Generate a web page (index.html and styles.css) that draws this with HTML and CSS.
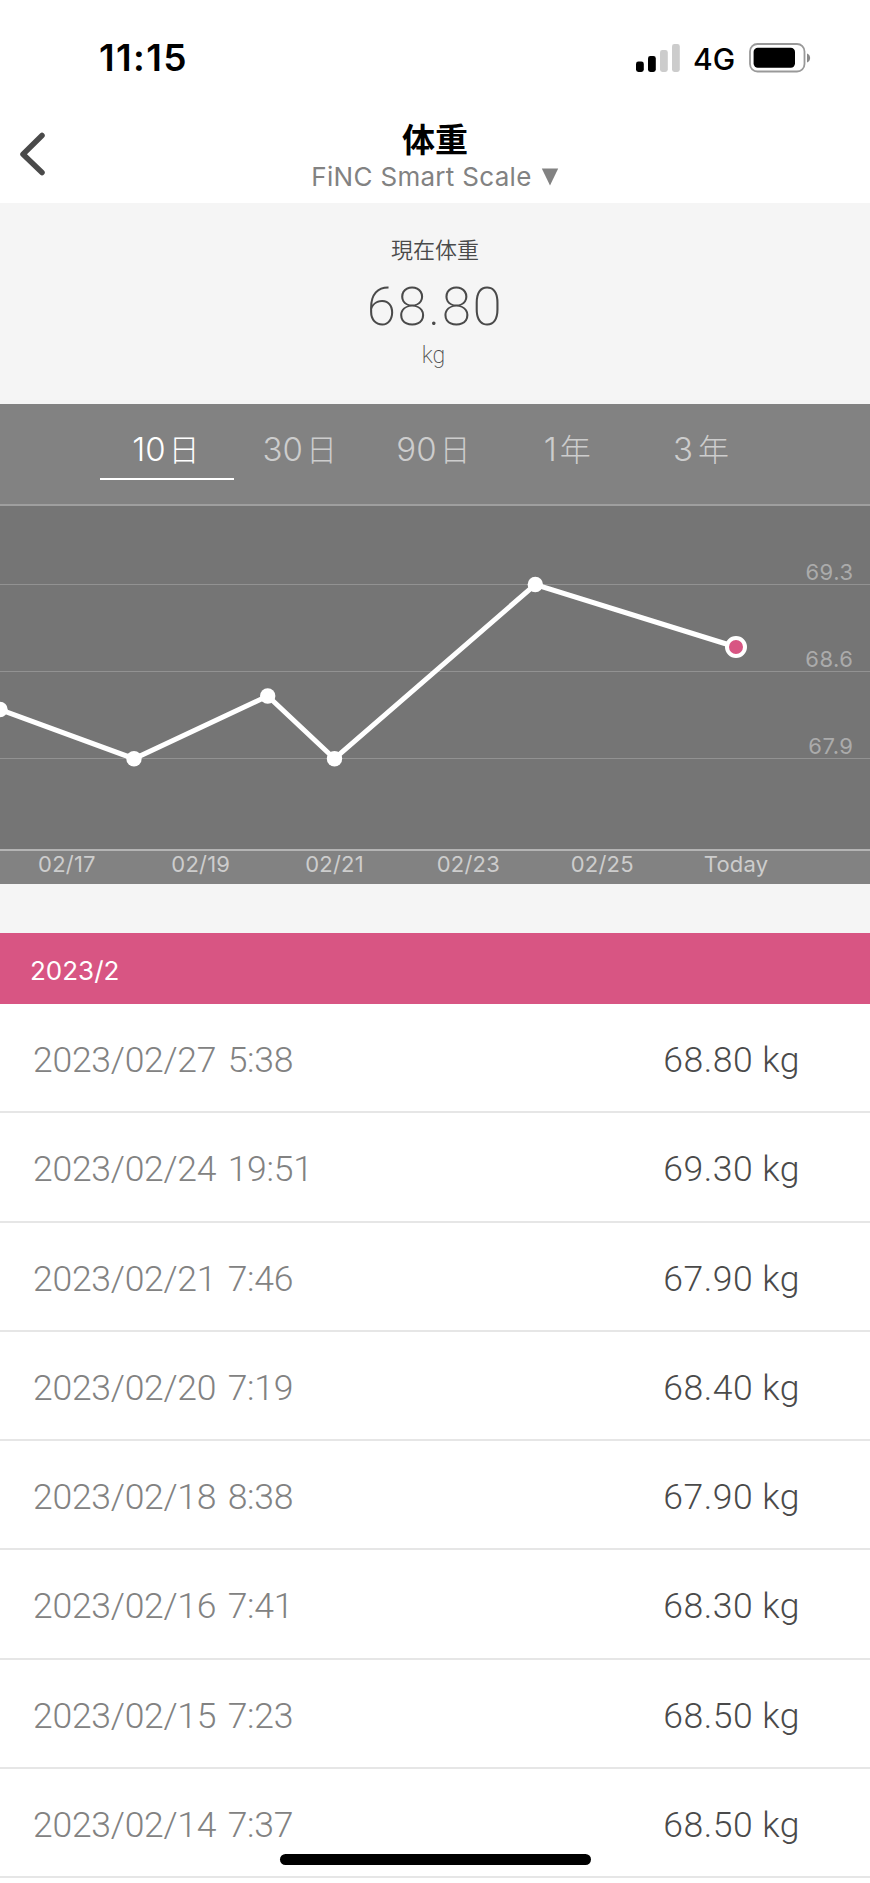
FILE: index.html
```html
<!DOCTYPE html>
<html lang="ja">

<head>
  <meta charset="UTF-8">
  <meta name="viewport" content="width=device-width, initial-scale=1.0">
  <title>体重</title>
  <link rel="stylesheet" href="styles.css">
</head>

<body>
  <div class="status-bar">
    <span class="time">11:15</span>
    <div class="status-icons">
      <svg class="signal" width="44" height="28" viewBox="0 0 44 28">
        <rect x="0" y="17.5" width="7.8" height="10.5" rx="2.4" />
        <rect x="12" y="12" width="7.8" height="16" rx="2.4" />
        <rect class="off" x="24" y="6" width="7.8" height="22" rx="2.4" />
        <rect class="off" x="36" y="0" width="7.8" height="28" rx="2.4" />
      </svg>
      <span class="network">4G</span>
      <svg class="battery" width="62" height="30" viewBox="0 0 62 30">
        <rect x="1" y="1" width="54.5" height="27.5" rx="7.5" fill="none" stroke="#999" stroke-width="1.8" />
        <rect x="4.6" y="4.8" width="41.4" height="20" rx="4.2" />
        <path d="M58 10.5c4.2 1.6 4.2 7.4 0 9z" fill="#888" />
      </svg>
    </div>
  </div>

  <header class="header">
    <svg class="back" width="28" height="46" viewBox="0 0 28 46">
      <path d="M23 3.5L4 22.2L23 40.5" />
    </svg>
    <h1>体重</h1>
    <div class="device">
      <span>FiNC Smart Scale</span>
      <svg width="18" height="18" viewBox="0 0 18 18">
        <path d="M0.8 0.5h16.4L9 17.5z" />
      </svg>
    </div>
  </header>

  <section class="current">
    <div class="current-label">現在体重</div>
    <div class="current-value">68.80</div>
    <div class="current-unit">kg</div>
  </section>

  <section class="graph">
    <nav class="tabs">
      <span class="tab active">10<b>日</b></span>
      <span class="tab">30<b>日</b></span>
      <span class="tab">90<b>日</b></span>
      <span class="tab">1<b>年</b></span>
      <span class="tab">3<b class="wide">年</b></span>
    </nav>
    <svg class="chart" width="870" height="343" viewBox="0 506 870 343">
      <g class="grid">
        <path d="M0 584.5H870" />
        <path d="M0 671.5H870" />
        <path d="M0 758.5H870" />
      </g>
      <g class="scale">
        <text x="853.5" y="579.5">69.3</text>
        <text x="853.5" y="666.5">68.6</text>
        <text x="853.5" y="753.5">67.9</text>
      </g>
      <polyline class="line" points="0,709.5 134,758.7 267.7,696 334.5,758.7 535.3,584.5 736,647" />
      <g class="points">
        <circle cx="0" cy="709.5" r="7.7" />
        <circle cx="134" cy="758.7" r="7.7" />
        <circle cx="267.7" cy="696" r="7.7" />
        <circle cx="334.5" cy="758.7" r="7.7" />
        <circle cx="535.3" cy="584.5" r="7.7" />
      </g>
      <circle class="today" cx="736" cy="647" r="9" />
    </svg>
    <div class="dates">
      <span>02/17</span>
      <span>02/19</span>
      <span>02/21</span>
      <span>02/23</span>
      <span>02/25</span>
      <span>Today</span>
    </div>
  </section>

  <h2 class="month">2023/2</h2>
  <ul class="records">
    <li><span class="date">2023/02/27 5:38</span><span class="weight">68.80 kg</span></li>
    <li><span class="date">2023/02/24 19:51</span><span class="weight">69.30 kg</span></li>
    <li><span class="date">2023/02/21 7:46</span><span class="weight">67.90 kg</span></li>
    <li><span class="date">2023/02/20 7:19</span><span class="weight">68.40 kg</span></li>
    <li><span class="date">2023/02/18 8:38</span><span class="weight">67.90 kg</span></li>
    <li><span class="date">2023/02/16 7:41</span><span class="weight">68.30 kg</span></li>
    <li><span class="date">2023/02/15 7:23</span><span class="weight">68.50 kg</span></li>
    <li><span class="date">2023/02/14 7:37</span><span class="weight">68.50 kg</span></li>
  </ul>

  <div class="home-indicator"></div>
</body>

</html>
```
FILE: styles.css
```css
* {
  box-sizing: border-box;
}

body {
  margin: 0;
  height: 1883px;
  overflow: hidden;
  background: #fff;
  font-family: Inter, "Noto Sans CJK JP", sans-serif;
}

svg {
  display: block;
}

/* status bar */
.status-bar {
  display: flex;
  justify-content: space-between;
  height: 115px;
  padding: 0 59px 0 99px;
}

.time {
  margin-top: 36px;
  font-size: 37px;
  line-height: 44px;
  font-weight: 600;
  letter-spacing: 1.4px;
}

.status-icons {
  display: flex;
  align-items: flex-start;
}

.signal {
  margin-top: 44px;
}

.signal .off {
  fill: #ccc;
}

.network {
  width: 42px;
  margin: 40px 14px 0 13px;
  font-size: 30px;
  line-height: 38px;
  font-weight: 500;
}

.battery {
  margin-top: 43px;
}

/* header */
.header {
  position: relative;
  height: 88px;
  text-align: center;
}

.back {
  position: absolute;
  left: 19px;
  top: 17px;
  fill: none;
  stroke: #4a4a4a;
  stroke-width: 5.5;
  stroke-linecap: round;
  stroke-linejoin: round;
}

.header h1 {
  margin: 0;
  padding-top: 2px;
  font-size: 33px;
  line-height: 46px;
  font-weight: 700;
}

.device {
  display: flex;
  justify-content: center;
  align-items: center;
  gap: 9px;
  color: #828282;
  font-size: 26px;
  line-height: 27px;
  letter-spacing: 0.3px;
}

.device svg {
  fill: #828282;
}

/* current weight */
.current {
  height: 201px;
  padding-top: 31px;
  background: #f5f5f5;
  color: #4a4a4a;
  text-align: center;
}

.current-label {
  font-size: 22px;
  line-height: 32px;
  font-weight: 350;
}

.current-value {
  font-family: Roboto, sans-serif;
  font-size: 53px;
  line-height: 62px;
  font-weight: 200;
  letter-spacing: 1.6px;
  margin-top: 10px;
}

.current-unit {
  font-family: Roboto, sans-serif;
  font-size: 23px;
  line-height: 26px;
  font-weight: 200;
  margin: 5px 3px 0 0;
}

/* graph */
.graph {
  height: 480px;
  background: #828282;
}

.tabs {
  display: flex;
  height: 102px;
  padding: 0 101px 0 100px;
  border-bottom: 2px solid #9f9f9f;
}

.tab {
  flex: 1;
  height: 76px;
  padding: 23px 2px 0 0;
  color: #cdcdcd;
  font-size: 33px;
  line-height: 44px;
  font-weight: 300;
  text-align: center;
}

.tab b {
  margin-left: 3px;
  font-size: 31px;
  font-weight: 300;
}

.tab .wide {
  margin-left: 5px;
}

.tab.active {
  color: #fff;
  border-bottom: 2.5px solid #fff;
}

.chart {
  background: #757575;
}

.grid {
  stroke: #929292;
  stroke-width: 1.2;
}

.scale {
  fill: #ababab;
  font-size: 22px;
  letter-spacing: 0.5px;
  text-anchor: end;
}

.line {
  fill: none;
  stroke: #fff;
  stroke-width: 5;
}

.points {
  fill: #fff;
}

.today {
  fill: #d85583;
  stroke: #fff;
  stroke-width: 4;
}

.dates {
  display: flex;
  padding-right: 67px;
  border-top: 2px solid #b4b4b4;
  color: #cdcdcd;
  font-size: 22px;
  line-height: 26px;
  letter-spacing: 0.2px;
}

.dates span {
  flex: 1;
  text-align: center;
}

/* records */
.month {
  height: 120px;
  margin: 0;
  padding: 22px 30px 0;
  border-top: 49px solid #f5f5f5;
  background: #d85583;
  color: #fff;
  font-size: 26px;
  line-height: 32px;
  font-weight: 400;
}

.records {
  margin: 0;
  padding: 0;
  list-style: none;
}

.records li {
  display: flex;
  justify-content: space-between;
  height: 109.3px;
  padding: 35px 70px 0 33px;
  border-bottom: 2px solid #e6e6e6;
  font-family: Roboto, sans-serif;
  font-size: 35.5px;
  line-height: 42px;
  font-weight: 300;
}

.date {
  color: #828282;
  letter-spacing: -0.25px;
  word-spacing: 3px;
}

.weight {
  color: #4a4a4a;
  letter-spacing: 0.5px;
}

.home-indicator {
  position: absolute;
  left: 280px;
  top: 1854px;
  width: 311px;
  height: 11px;
  border-radius: 6px;
  background: #000;
}
```
